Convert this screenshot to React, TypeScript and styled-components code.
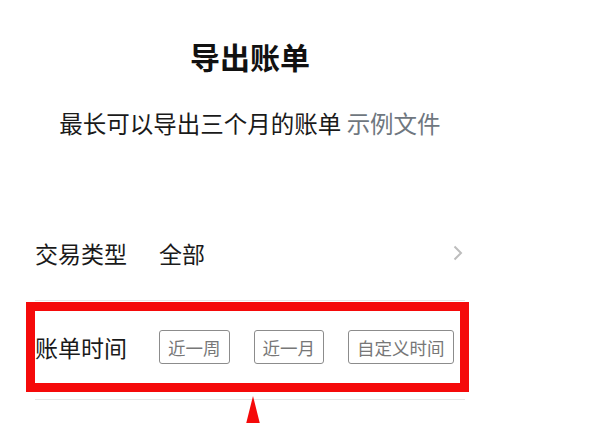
import React from 'react';
import styled, { createGlobalStyle } from 'styled-components';

const GlobalStyle = createGlobalStyle`
  html, body {
    margin: 0;
    padding: 0;
    background: #ffffff;
  }
  html {
    overflow: hidden;
  }
  body {
    font-family: "Noto Sans CJK SC", "Noto Sans", sans-serif;
    color: #1a1a1a;
  }
`;

const Page = styled.div`
  box-sizing: border-box;
  width: 465px;
  min-height: 100vh;
  padding-left: 35px;
  display: flex;
  flex-direction: column;
`;

const Title = styled.h1`
  margin: 36px 0 0;
  font-size: 30px;
  line-height: 40px;
  font-weight: 700;
  text-align: center;
  color: #111;
`;

const Subtitle = styled.p`
  margin: 31px 0 0;
  font-size: 23.5px;
  line-height: 32px;
  text-align: center;
  color: #1a1a1a;
  white-space: nowrap;
`;

const Link = styled.span`
  color: #6f7780;
`;

const Form = styled.div`
  margin-top: 71px;
  display: flex;
  flex-direction: column;
`;

const Row = styled.div<{ $height: number; $lift: number }>`
  position: relative;
  box-sizing: border-box;
  height: ${(p) => p.$height}px;
  padding-bottom: ${(p) => p.$lift}px;
  display: flex;
  align-items: center;
  border-bottom: 1px solid #e6e6e6;
`;

const Label = styled.span`
  font-size: 23px;
  margin-right: 32px;
  white-space: nowrap;
`;

const Value = styled.span`
  flex: 1;
  font-size: 23px;
`;

const Chevron = styled.svg`
  margin-right: 2px;
`;

const Options = styled.div`
  display: flex;
  gap: 24px;
`;

const Option = styled.button`
  box-sizing: border-box;
  height: 34px;
  padding: 0 8px;
  border: 1.5px solid #8c8c8c;
  border-radius: 3px;
  background: #fff;
  font-family: inherit;
  font-size: 17.5px;
  color: #777;
  cursor: pointer;
`;

const Highlight = styled.div`
  position: absolute;
  left: -9px;
  right: -4px;
  top: 1px;
  bottom: 7px;
  border: 9px solid #f50a0a;
  pointer-events: none;
`;

const Arrow = styled.div`
  position: absolute;
  left: 211px;
  top: calc(100% - 3px);
  width: 0;
  height: 0;
  border-left: 7px solid transparent;
  border-right: 7px solid transparent;
  border-bottom: 28px solid #f50a0a;
`;

const App: React.FC = () => {
  return (
    <>
      <GlobalStyle />
      <Page>
        <Title>导出账单</Title>
        <Subtitle>
          最长可以导出三个月的账单 <Link>示例文件</Link>
        </Subtitle>
        <Form>
          <Row $height={91} $lift={4}>
            <Label>交易类型</Label>
            <Value>全部</Value>
            <Chevron width="10" height="16" viewBox="0 0 10 16">
              <polyline points="1.5,1.5 8,8 1.5,14.5" fill="none" stroke="#bdbdbd" strokeWidth="2" />
            </Chevron>
          </Row>
          <Row $height={99} $lift={6}>
            <Label>账单时间</Label>
            <Options>
              <Option>近一周</Option>
              <Option>近一月</Option>
              <Option>自定义时间</Option>
            </Options>
            <Highlight />
            <Arrow />
          </Row>
        </Form>
      </Page>
    </>
  );
};

export default App;
